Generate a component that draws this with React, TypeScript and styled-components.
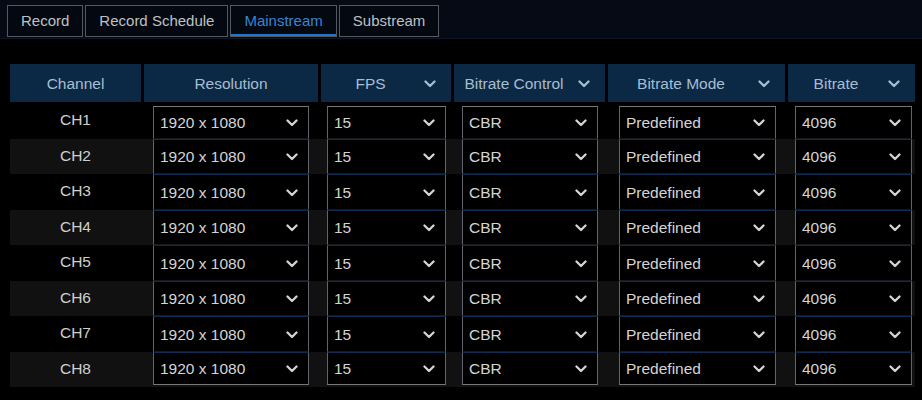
import React from "react";
import styled, { createGlobalStyle } from "styled-components";

const Global = createGlobalStyle`
  html, body { margin: 0; padding: 0; background: #000; }
  body { font-family: "Liberation Sans", Arial, sans-serif; }
  * { box-sizing: border-box; }
`;

const Page = styled.div`
  width: 922px;
  height: 400px;
  background: #000;
  overflow: hidden;
`;

const TopBar = styled.div`
  height: 39px;
  background: #050a14;
  border-bottom: 1px solid #0b1626;
  display: flex;
  align-items: flex-start;
  gap: 2px;
  padding: 5px 0 0 7px;
`;

const Tab = styled.div<{ $active?: boolean }>`
  height: 32px;
  padding: 0 13px 0 13px;
  display: flex;
  align-items: center;
  justify-content: center;
  border: 1px solid #55585c;
  background: #030811;
  color: ${(p) => (p.$active ? "#3585d4" : "#bfc1c4")};
  font-size: 15px;
  padding-bottom: 1px;
  box-shadow: ${(p) => (p.$active ? "inset 0 -2px 0 #1c74d0" : "none")};
`;

const Table = styled.div`
  margin: 25px 0 0 10px;
  width: 905px;
`;

const COLS = "131px 174px 130px 151px 177px 127px";

const HeaderRow = styled.div`
  display: grid;
  grid-template-columns: ${COLS};
  column-gap: 3px;
  height: 38px;
  margin-bottom: 1px;
`;

const HeaderCell = styled.div`
  background: #0b2944;
  display: flex;
  align-items: center;
  color: #a6bdd3;
  font-size: 15.5px;
  padding-top: 1px;
`;

const HeaderLabel = styled.span`
  flex: 1;
  text-align: center;
`;

const HeaderChevron = styled.span`
  display: flex;
  margin-right: 15px;
  margin-left: 4px;
`;

const BodyRow = styled.div<{ $striped: boolean }>`
  display: grid;
  grid-template-columns: ${COLS};
  column-gap: 3px;
  height: 35.5px;
  background: ${(p) => (p.$striped ? "#111111" : "#000")};
`;

const ChannelCell = styled.div`
  display: flex;
  align-items: center;
  justify-content: center;
  color: #cfcfcf;
  font-size: 15.5px;
  padding-bottom: 1px;
`;

const SelectCell = styled.div`
  display: flex;
  justify-content: center;
`;

const Select = styled.div<{ $w: number; $shift: number; $first: boolean; $last: boolean }>`
  width: ${(p) => p.$w}px;
  margin-left: ${(p) => p.$shift}px;
  margin-top: ${(p) => (p.$first ? 3 : 0)}px;
  margin-bottom: ${(p) => (p.$last ? 2 : 0)}px;
  background: #000;
  border-left: 1px solid #62666c;
  border-right: 1px solid #62666c;
  border-top: 1px solid ${(p) => (p.$first ? "#76787c" : "#0f2b52")};
  border-bottom: 1px solid ${(p) => (p.$last ? "#76787c" : "#151a22")};
  display: flex;
  align-items: center;
  padding: 2px 10px 0 6px;
  color: #d4d4d4;
  font-size: 15.5px;
`;

const SelectValue = styled.span`
  flex: 1;
`;

const Chevron = ({ color }: { color: string }) => (
  <svg width="12" height="8" viewBox="0 0 12 8">
    <path
      d="M1.5 1.5 L6 6 L10.5 1.5"
      fill="none"
      stroke={color}
      strokeWidth="2.3"
      strokeLinecap="round"
      strokeLinejoin="round"
    />
  </svg>
);

const columns = [
  { title: "Resolution", chevron: false, w: 156, shift: 0, value: "1920 x 1080" },
  { title: "FPS", chevron: true, w: 119, shift: 1, value: "15" },
  { title: "Bitrate Control", chevron: true, w: 136, shift: 1, value: "CBR" },
  { title: "Bitrate Mode", chevron: true, w: 157, shift: 2, value: "Predefined" },
  { title: "Bitrate", chevron: true, w: 117, shift: 4, value: "4096" },
];

const channels = ["CH1", "CH2", "CH3", "CH4", "CH5", "CH6", "CH7", "CH8"];

export default function App() {
  return (
    <Page>
      <Global />
      <TopBar>
        <Tab>Record</Tab>
        <Tab>Record Schedule</Tab>
        <Tab $active>Mainstream</Tab>
        <Tab>Substream</Tab>
      </TopBar>
      <Table>
        <HeaderRow>
          <HeaderCell>
            <HeaderLabel>Channel</HeaderLabel>
          </HeaderCell>
          {columns.map((c) => (
            <HeaderCell key={c.title}>
              <HeaderLabel>{c.title}</HeaderLabel>
              {c.chevron && (
                <HeaderChevron>
                  <Chevron color="#a6bdd3" />
                </HeaderChevron>
              )}
            </HeaderCell>
          ))}
        </HeaderRow>
        {channels.map((ch, i) => (
          <BodyRow key={ch} $striped={i % 2 === 1}>
            <ChannelCell>{ch}</ChannelCell>
            {columns.map((c) => (
              <SelectCell key={c.title}>
                <Select
                  $w={c.w}
                  $shift={c.shift}
                  $first={i === 0}
                  $last={i === channels.length - 1}
                >
                  <SelectValue>{c.value}</SelectValue>
                  <Chevron color="#d4d4d4" />
                </Select>
              </SelectCell>
            ))}
          </BodyRow>
        ))}
      </Table>
    </Page>
  );
}
